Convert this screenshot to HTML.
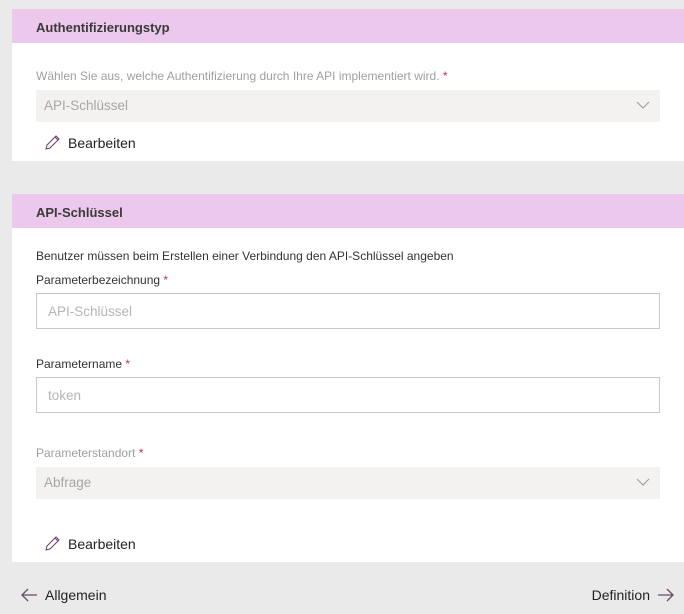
<!DOCTYPE html>
<html><head><meta charset="utf-8"><style>
*{margin:0;padding:0;box-sizing:border-box}
body{width:684px;height:614px;background:#eaeaea;font-family:"Liberation Sans",sans-serif;position:relative;overflow:hidden;color:#222}
.card{position:absolute;left:12px;width:672px;background:#fff}
.hdr{height:34px;background:#ecc8ec;font-size:13px;font-weight:bold;color:#3a3a3a;padding:11px 0 0 24px}
.abs{position:absolute}
.lbl{font-size:12px;color:#333}
.gl{color:#a0a0a0}
.req{color:#c4314b}
.sel{position:absolute;left:24px;width:624px;height:32px;background:#f3f2f1;font-size:13.5px;color:#a6a6a6;padding:8px 0 0 8px}
.inp{position:absolute;left:24px;width:624px;height:36px;border:1px solid #c8c8c8;font-size:13.5px;color:#b5b5b5;padding:10px 0 0 11px}
.chev{position:absolute;right:10px;top:10px}
.edit{position:absolute;left:32px;font-size:14px;color:#222}
.edit svg{vertical-align:-3px;margin-right:7px}
</style></head><body>
<div class="card" style="top:9px;height:152px">
 <div class="hdr">Authentifizierungstyp</div>
 <div class="abs lbl gl" style="left:24px;top:60px">Wählen Sie aus, welche Authentifizierung durch Ihre API implementiert wird. <span class="req">*</span></div>
 <div class="sel" style="top:81px">API-Schlüssel<svg class="chev" width="14" height="10"><path d="M1 2l6 6 6-6" stroke="#999" fill="none"/></svg></div>
 <div class="edit" style="top:125px"><svg width="17" height="17"><path d="M2 15l1-4 9-9 3 3-9 9z M11 3l3 3" stroke="#6b3a6b" fill="none"/></svg>Bearbeiten</div>
</div>
<div class="card" style="top:194px;height:368px">
 <div class="hdr">API-Schlüssel</div>
 <div class="abs lbl" style="left:24px;top:55px">Benutzer müssen beim Erstellen einer Verbindung den API-Schlüssel angeben</div>
 <div class="abs lbl" style="left:24px;top:79px">Parameterbezeichnung <span class="req">*</span></div>
 <div class="inp" style="top:99px">API-Schlüssel</div>
 <div class="abs lbl" style="left:24px;top:163px">Parametername <span class="req">*</span></div>
 <div class="inp" style="top:183px">token</div>
 <div class="abs lbl gl" style="left:24px;top:252px">Parameterstandort <span class="req">*</span></div>
 <div class="sel" style="top:273px">Abfrage<svg class="chev" width="14" height="10"><path d="M1 2l6 6 6-6" stroke="#999" fill="none"/></svg></div>
 <div class="edit" style="top:341px"><svg width="17" height="17"><path d="M2 15l1-4 9-9 3 3-9 9z M11 3l3 3" stroke="#6b3a6b" fill="none"/></svg>Bearbeiten</div>
</div>
<div class="abs" style="left:20px;top:587px;font-size:14px"><svg width="18" height="14" style="vertical-align:-2px;margin-right:7px"><path d="M17 7H2M8 1L2 7l6 6" stroke="#6b4a6b" stroke-width="1.3" fill="none"/></svg>Allgemein</div>
<div class="abs" style="right:9px;top:587px;font-size:14px">Definition<svg width="18" height="14" style="vertical-align:-2px;margin-left:7px"><path d="M1 7h15M10 1l6 6-6 6" stroke="#6b4a6b" stroke-width="1.3" fill="none"/></svg></div>
</body></html>
